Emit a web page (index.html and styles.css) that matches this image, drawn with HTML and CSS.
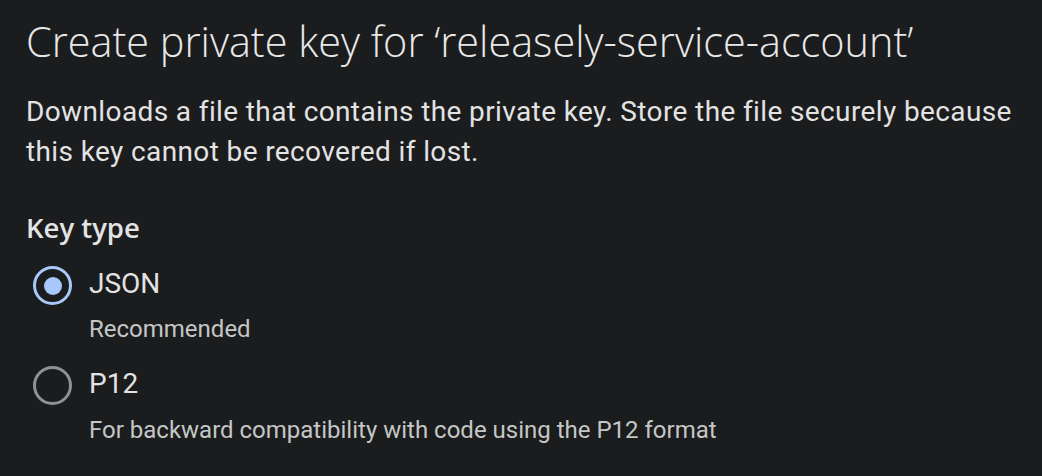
FILE: index.html
```html
<!DOCTYPE html>
<html lang="en">
<head>
  <meta charset="utf-8">
  <title>Create private key</title>
  <link rel="stylesheet" href="styles.css">
</head>
<body>
  <div class="dialog">
    <h2 class="dialog-title">Create private key for ‘releasely-service-account’</h2>
    <p class="dialog-text">Downloads a file that contains the private key. Store the file securely because this key cannot be recovered if lost.</p>

    <div class="key-type">
      <div class="key-type-label">Key type</div>

      <label class="radio-option">
        <span class="radio radio-checked"></span>
        <span class="radio-body">
          <span class="radio-label">JSON</span>
          <span class="radio-hint">Recommended</span>
        </span>
      </label>

      <label class="radio-option">
        <span class="radio"></span>
        <span class="radio-body">
          <span class="radio-label">P12</span>
          <span class="radio-hint">For backward compatibility with code using the P12 format</span>
        </span>
      </label>
    </div>
  </div>
</body>
</html>
```

FILE: styles.css
```css
body {
  margin: 0;
  background-color: #1b1c1e;
  color: #e3e3e3;
  font-family: Roboto, "Liberation Sans", sans-serif;
  height: 100vh;
  overflow: hidden;
}

.dialog {
  padding: 13px 10px 0 26px;
}

.dialog-title {
  margin: 0;
  font-family: "Open Sans", Roboto, sans-serif;
  font-weight: 300;
  font-size: 41.4px;
  line-height: 56px;
  color: #e8e8e8;
}

.dialog-text {
  margin: 23px 0 0 0;
  font-size: 28px;
  line-height: 40px;
  letter-spacing: 0.38px;
  color: #e3e3e3;
}

.key-type {
  margin-top: 38px;
  display: flex;
  flex-direction: column;
  gap: 18px;
}

.key-type-label {
  font-family: "Open Sans", Roboto, sans-serif;
  font-size: 27.5px;
  font-weight: 600;
  line-height: 36px;
  color: #e3e3e3;
}

.radio-option {
  display: flex;
  align-items: flex-start;
  gap: 17px;
}

.radio-option + .radio-option {
  margin-top: 1px;
}

.radio {
  flex: none;
  width: 33px;
  height: 33px;
  margin: 2px 0 0 7px;
  border: 3px solid #8e9195;
  border-radius: 50%;
  display: flex;
  align-items: center;
  justify-content: center;
}

.radio-checked {
  border-color: #a8c7fa;
}

.radio-checked::after {
  content: "";
  width: 18px;
  height: 18px;
  border-radius: 50%;
  background-color: #a8c7fa;
}

.radio-body {
  display: flex;
  flex-direction: column;
  gap: 9.4px;
}

.radio-label {
  font-size: 28px;
  line-height: 40px;
  color: #e3e3e3;
}

.radio-hint {
  font-size: 24px;
  line-height: 32px;
  color: #c4c7c5;
}
```
